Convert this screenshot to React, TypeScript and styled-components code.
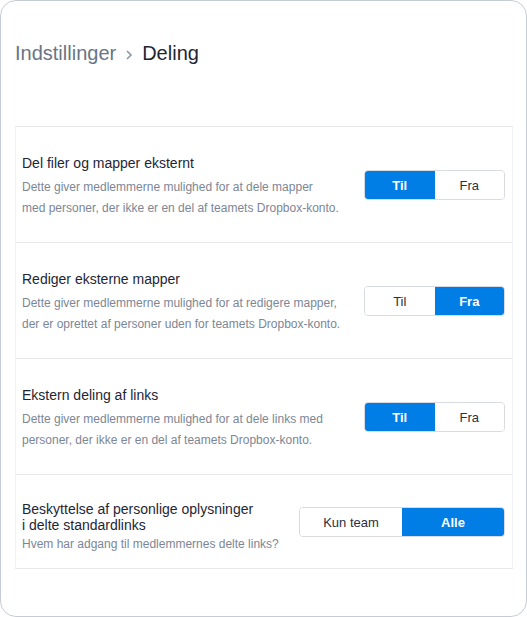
import styled, { createGlobalStyle } from 'styled-components';

const GlobalStyle = createGlobalStyle`
  html, body {
    margin: 0;
    padding: 0;
    background: #ffffff;
  }
  body {
    font-family: "Liberation Sans", Arial, sans-serif;
    -webkit-font-smoothing: antialiased;
  }
`;

const Card = styled.div`
  box-sizing: border-box;
  width: 527px;
  height: 617px;
  border: 1px solid #c6ccd6;
  border-radius: 16px;
  background: #ffffff;
  padding: 0 13px 0 14px;
`;

const Breadcrumb = styled.div`
  display: flex;
  align-items: center;
  gap: 9px;
  height: 125px;
  padding-bottom: 20px;
  box-sizing: border-box;
  font-size: 20px;
`;

const Crumb = styled.span<{ $current?: boolean }>`
  color: ${(p) => (p.$current ? '#1e2633' : '#687585')};
`;

const Chevron = styled.svg`
  width: 8px;
  height: 12px;
  margin-top: 2px;
`;

const List = styled.div`
  border: 1px solid #f1f2f5;
  border-top-color: #e6e8ec;
  border-bottom-color: #e6e8ec;
`;

const Row = styled.div<{ $height: number }>`
  display: flex;
  align-items: center;
  justify-content: space-between;
  height: ${(p) => p.$height}px;
  padding: 0 7px 0 6px;
  & + & {
    border-top: 1px solid #e6e8ec;
  }
`;

const Text = styled.div<{ $tight?: boolean }>`
  align-self: flex-start;
  padding-top: ${(p) => (p.$tight ? '26px' : '28px')};
`;

const Title = styled.div<{ $tight?: boolean }>`
  font-size: 14px;
  line-height: ${(p) => (p.$tight ? '16px' : '17px')};
  color: #1e2633;
  margin-bottom: ${(p) => (p.$tight ? '1px' : '5px')};
`;

const Desc = styled.div`
  font-size: 12px;
  line-height: 21px;
  color: #7c8695;
`;

const Toggle = styled.div<{ $width: number }>`
  display: flex;
  width: ${(p) => p.$width}px;
  height: 30px;
  border: 1px solid #d8dce2;
  border-radius: 4px;
  overflow: hidden;
  box-sizing: border-box;
  flex-shrink: 0;
`;

const Option = styled.button<{ $active?: boolean }>`
  flex: 1;
  border: none;
  margin: 0;
  padding: 1px 0 0;
  font-family: inherit;
  font-size: 13px;
  font-weight: ${(p) => (p.$active ? 700 : 400)};
  color: ${(p) => (p.$active ? '#ffffff' : '#2a313c')};
  background: ${(p) => (p.$active ? '#007ee5' : '#ffffff')};
`;

type Setting = {
  title: string[];
  desc: string[];
  options: string[];
  active: number;
  width: number;
  height: number;
};

const settings: Setting[] = [
  {
    title: ['Del filer og mapper eksternt'],
    desc: [
      'Dette giver medlemmerne mulighed for at dele mapper',
      'med personer, der ikke er en del af teamets Dropbox-konto.',
    ],
    options: ['Til', 'Fra'],
    active: 0,
    width: 141,
    height: 115,
  },
  {
    title: ['Rediger eksterne mapper'],
    desc: [
      'Dette giver medlemmerne mulighed for at redigere mapper,',
      'der er oprettet af personer uden for teamets Dropbox-konto.',
    ],
    options: ['Til', 'Fra'],
    active: 1,
    width: 141,
    height: 115,
  },
  {
    title: ['Ekstern deling af links'],
    desc: [
      'Dette giver medlemmerne mulighed for at dele links med',
      'personer, der ikke er en del af teamets Dropbox-konto.',
    ],
    options: ['Til', 'Fra'],
    active: 0,
    width: 141,
    height: 115,
  },
  {
    title: ['Beskyttelse af personlige oplysninger', 'i delte standardlinks'],
    desc: ['Hvem har adgang til medlemmernes delte links?'],
    options: ['Kun team', 'Alle'],
    active: 1,
    width: 206,
    height: 93,
  },
];

const App = () => {
  return (
    <>
      <GlobalStyle />
      <Card>
        <Breadcrumb>
          <Crumb>Indstillinger</Crumb>
          <Chevron viewBox="0 0 8 12">
            <path d="M2 2l4 4-4 4" fill="none" stroke="#8a95a3" strokeWidth="1.6" />
          </Chevron>
          <Crumb $current>Deling</Crumb>
        </Breadcrumb>
        <List>
          {settings.map((s) => {
            const tight = s.title.length > 1;
            return (
              <Row key={s.title[0]} $height={s.height}>
                <Text $tight={tight}>
                  <Title $tight={tight}>
                    {s.title.map((t) => (
                      <div key={t}>{t}</div>
                    ))}
                  </Title>
                  <Desc>
                    {s.desc.map((d) => (
                      <div key={d}>{d}</div>
                    ))}
                  </Desc>
                </Text>
                <Toggle $width={s.width}>
                  {s.options.map((o, i) => (
                    <Option key={o} $active={i === s.active}>
                      {o}
                    </Option>
                  ))}
                </Toggle>
              </Row>
            );
          })}
        </List>
      </Card>
    </>
  );
};

export default App;
